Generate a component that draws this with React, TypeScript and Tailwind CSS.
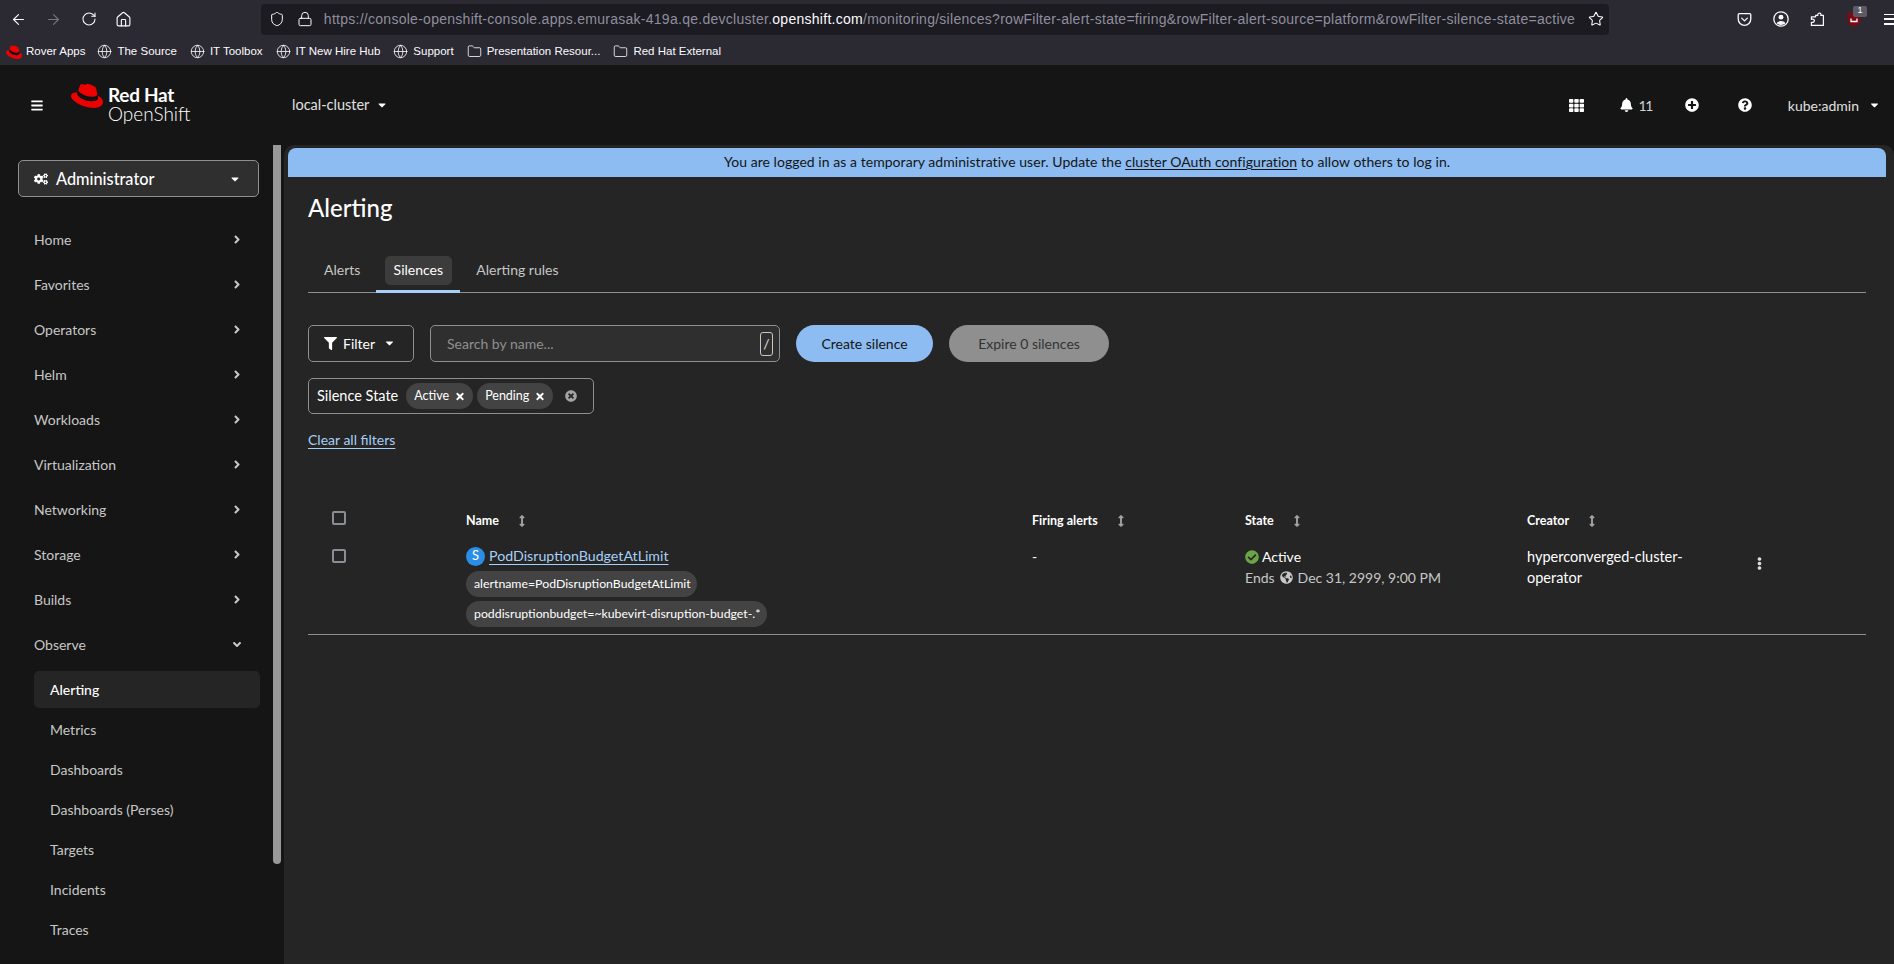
import { ArrowLeft, ArrowRight, RotateCw, House, Shield, Lock, Star, Globe, Folder } from "lucide-react";
import {
  FaAngleDown,
  FaAngleRight,
  FaArrowsAltV,
  FaBars,
  FaBell,
  FaCaretDown,
  FaCheckCircle,
  FaCogs,
  FaEllipsisV,
  FaFilter,
  FaGlobeAmericas,
  FaPlusCircle,
  FaQuestionCircle,
  FaTh,
  FaTimes,
  FaTimesCircle,
} from "react-icons/fa";

const NAV_ITEMS = ["Home", "Favorites", "Operators", "Helm", "Workloads", "Virtualization", "Networking", "Storage", "Builds"];
const OBSERVE_ITEMS = ["Metrics", "Dashboards", "Dashboards (Perses)", "Targets", "Incidents", "Traces"];

const BOOKMARKS = [
  { label: "The Source", icon: "globe" },
  { label: "IT Toolbox", icon: "globe" },
  { label: "IT New Hire Hub", icon: "globe" },
  { label: "Support", icon: "globe" },
  { label: "Presentation Resour...", icon: "folder" },
  { label: "Red Hat External", icon: "folder" },
];

function RedHatLogo({ className }: { className?: string }) {
  return (
    <svg viewBox="0 2.4 24 18.7" preserveAspectRatio="none" className={className}>
      <path
        d="M16.009 13.386c1.577 0 3.86-.326 3.86-2.202a1.765 1.765 0 0 0-.04-.431l-.94-4.08c-.216-.898-.406-1.305-1.982-2.093-1.223-.625-3.888-1.658-4.676-1.658-.733 0-.947.946-1.822.946-.842 0-1.467-.706-2.255-.706-.757 0-1.25.515-1.63 1.576 0 0-1.06 2.99-1.197 3.424a.81.81 0 0 0-.028.245c0 1.162 4.577 4.974 10.71 4.974"
        fill="#e00"
      />
      <path
        d="M20.11 11.951c.218 1.032.218 1.14.218 1.277 0 1.765-1.984 2.745-4.593 2.745-5.895.004-11.06-3.451-11.06-5.734a2.326 2.326 0 0 1 .19-.925C2.746 9.415 0 9.794 0 12.217c0 3.969 9.405 8.861 16.851 8.861 5.71 0 7.149-2.582 7.149-4.62 0-1.605-1.387-3.425-3.887-4.512"
        fill="#e00"
      />
      <path
        d="M20.11 11.951c.218 1.032.218 1.14.218 1.277 0 1.765-1.984 2.745-4.593 2.745-5.895.004-11.06-3.451-11.06-5.734a2.326 2.326 0 0 1 .19-.925l.68-1.7a.81.81 0 0 0-.028.245c0 1.162 4.577 4.974 10.482 4.827 1.577 0 3.86-.326 3.86-2.202 0-.15-.01-.29-.04-.431z"
        fill="#111"
      />
    </svg>
  );
}

function PocketIcon() {
  return (
    <svg viewBox="0 0 16 16" className="h-[15px] w-[15px]" fill="none" stroke="currentColor" strokeWidth="1.4">
      <path d="M2.500 1.800h11c.7 0 1.200.5 1.200 1.200v4.500a6.700 6.700 0 0 1-13.400 0V3c0-.7.5-1.200 1.200-1.200z" />
      <path d="M5 6.500l3 3 3-3" strokeLinecap="round" strokeLinejoin="round" />
    </svg>
  );
}

function AccountIcon() {
  return (
    <svg viewBox="0 0 16 16" className="h-[16px] w-[16px]" fill="none" stroke="currentColor" strokeWidth="1.3">
      <circle cx="8" cy="8" r="7.200" />
      <circle cx="8" cy="6.200" r="2.400" fill="currentColor" stroke="none" />
      <path d="M3.500 12.300c1-1.500 2.600-2.200 4.500-2.200s3.500.7 4.500 2.200c-1.200 1.100-2.800 1.700-4.500 1.700s-3.300-.6-4.500-1.700z" fill="currentColor" stroke="none" />
    </svg>
  );
}

function ExtensionIcon() {
  return (
    <svg viewBox="0 0 16 16" className="h-[16px] w-[15px]" fill="none" stroke="currentColor" strokeWidth="1.3" strokeLinejoin="round">
      <path d="M6 4.200h2.300c-.8-2.500 3.400-3.500 3.400-.9 0 .4-.1.700-.3.900h2.900v10.600H1.500v-3.300c1.500.5 3.200-.3 3.200-1.600 0-1.400-1.700-2-3.200-1.500V5.700H6z" />
    </svg>
  );
}

function UblockIcon() {
  return (
    <span className="relative block h-[15px] w-[14px]">
      <svg viewBox="0 0 14 15" className="h-[15px] w-[14px]">
        <path d="M7 0l6.500 1.500v6.200c0 3.400-3 5.900-6.500 7.300C3.500 13.600.5 11.100.5 7.700V1.500z" fill="#7c0a14" />
        <path d="M4 6.500v3h6v-3" fill="none" stroke="#ffffff" strokeWidth="1.300" />
      </svg>
      <span className="absolute -top-[6px] left-[6px] flex h-[11px] w-[14px] items-center justify-center rounded-[2px] bg-[#5b5b66] text-[9px] text-white">1</span>
    </span>
  );
}

function SortIcon() {
  return <FaArrowsAltV className="h-[12px] w-[12px] text-[#a3a3a3]" />;
}

function Label({ children, width }: { children: string; width: string }) {
  return (
    <div className={`flex h-[26px] items-center rounded-full bg-[#434343] pl-[8px] text-[12.3px] text-white ${width}`}>{children}</div>
  );
}

function FilterChip({ label }: { label: string }) {
  return (
    <span className="flex h-[26px] items-center gap-[6px] rounded-full bg-[#434343] pl-[8px] pr-[8px] text-[12.5px] text-white">
      {label}
      <FaTimes className="h-[11px] w-[10px]" />
    </span>
  );
}

function Checkbox() {
  return <span className="block h-[14px] w-[14px] rounded-[2px] border-2 border-[#8a8d94]" />;
}

function BrowserChrome() {
  return (
    <div className="h-[65px] bg-[#2b2a33] font-['Liberation_Sans',sans-serif] text-[#fbfbfe]">
      <div className="flex h-[38px] items-center">
        <div className="flex w-[261px] items-center pl-[10px]">
          <ArrowLeft className="h-[17px] w-[17px]" strokeWidth={1.6} />
          <ArrowRight className="ml-[18px] h-[17px] w-[17px] text-[#77767d]" strokeWidth={1.6} />
          <RotateCw className="ml-[19px] h-[16px] w-[16px]" strokeWidth={1.6} />
          <House className="ml-[18px] h-[17px] w-[17px]" strokeWidth={1.6} />
        </div>
        <div className="flex h-[31px] w-[1349px] items-center rounded-[4px] bg-[#1c1b22] pl-[8px]">
          <Shield className="h-[16px] w-[16px]" strokeWidth={1.5} />
          <Lock className="ml-[12px] h-[16px] w-[16px]" strokeWidth={1.5} />
          <div className="ml-[11px] w-[1255px] whitespace-nowrap text-[14px] tracking-[0.27px] text-[#8f8f9d]">
            https://console-openshift-console.apps.emurasak-419a.qe.devcluster.<span className="text-[#fbfbfe]">openshift.com</span>
            /monitoring/silences?rowFilter-alert-state=firing&amp;rowFilter-alert-source=platform&amp;rowFilter-silence-state=active
          </div>
          <Star className="ml-[9px] h-[16px] w-[16px]" strokeWidth={1.6} />
        </div>
        <div className="flex flex-1 items-center pl-[128px]">
          <PocketIcon />
          <span className="ml-[21px]">
            <AccountIcon />
          </span>
          <span className="ml-[21px]">
            <ExtensionIcon />
          </span>
          <span className="ml-[22px]">
            <UblockIcon />
          </span>
          <span className="ml-[23px] flex h-[11px] w-[10px] shrink-0 flex-col justify-between">
            <span className="block h-[1.5px] bg-[#fbfbfe]" />
            <span className="block h-[1.5px] bg-[#fbfbfe]" />
            <span className="block h-[1.5px] bg-[#fbfbfe]" />
          </span>
        </div>
      </div>
      <div className="flex h-[27px] items-center pl-[6px] text-[11.5px]">
        <RedHatLogo className="h-[14px] w-[16px]" />
        <span className="ml-[4px] mr-[12px]">Rover Apps</span>
        {BOOKMARKS.map((bookmark) => (
          <span key={bookmark.label} className="mr-[13px] flex items-center gap-[5px]">
            {bookmark.icon === "globe" ? (
              <Globe className="h-[15px] w-[15px]" strokeWidth={1.3} />
            ) : (
              <Folder className="h-[15px] w-[15px]" strokeWidth={1.3} />
            )}
            {bookmark.label}
          </span>
        ))}
      </div>
    </div>
  );
}

function Masthead() {
  return (
    <header className="flex h-[80px] items-center bg-[#151515] text-white">
      <FaBars className="ml-[31px] h-[13px] w-[12px]" />
      <RedHatLogo className="mb-[19px] ml-[28px] h-[25px] w-[32px]" />
      <div className="mb-[2px] ml-[5px] flex w-[184px] flex-col font-['Lato',sans-serif] text-[19px] leading-[19px]">
        <span className="font-bold tracking-[-0.3px]">Red Hat</span>
        <span className="font-light">OpenShift</span>
      </div>
      <span className="text-[14.5px] text-[#e0e0e0]">local-cluster</span>
      <FaCaretDown className="ml-[8px] h-[12px] w-[10px]" />
      <div className="ml-auto flex items-center pr-[15px] text-[14px]">
        <FaTh className="h-[15px] w-[15px]" />
        <FaBell className="ml-[36px] h-[14px] w-[13px]" />
        <span className="ml-[6px] tracking-[-1.5px] text-[#d2d2d2]">11</span>
        <FaPlusCircle className="ml-[33px] h-[14px] w-[14px]" />
        <FaQuestionCircle className="ml-[39px] h-[14px] w-[14px]" />
        <span className="ml-[36px] text-[#e0e0e0]">kube:admin</span>
        <FaCaretDown className="ml-[11px] h-[12px] w-[9px]" />
      </div>
    </header>
  );
}

function Sidebar() {
  return (
    <aside className="relative w-[284px] shrink-0 bg-[#151515] pl-[18px] pt-[15px] text-[14px] text-[#c7c7c7]">
      <div className="absolute right-[3px] top-0 h-[719px] w-[8px] rounded-b-full bg-[#999999]" />
      <div className="flex h-[37px] w-[241px] items-center rounded-[5px] border border-[#8f8f8f] bg-[#2f2f2f] pl-[15px] pr-[18px] pt-[1px] text-[16.3px] font-medium text-white">
        <FaCogs className="h-[14px] w-[14px]" />
        <span className="ml-[8px]">Administrator</span>
        <FaCaretDown className="ml-auto h-[12px] w-[10px]" />
      </div>
      <nav className="mt-[20px] pl-[16px]">
        {NAV_ITEMS.map((item) => (
          <div key={item} className="flex h-[45px] w-[209px] items-center justify-between pr-[1px]">
            <span>{item}</span>
            <FaAngleRight className="h-[13px] w-[10px]" />
          </div>
        ))}
        <div className="flex h-[45px] w-[209px] items-center justify-between">
          <span>Observe</span>
          <FaAngleDown className="h-[13px] w-[12px]" />
        </div>
        <div className="mt-[4px] flex h-[37px] w-[226px] items-center rounded-[5px] bg-[#252525] pl-[16px] font-medium text-white">Alerting</div>
        <div className="mt-[1px]">
          {OBSERVE_ITEMS.map((item) => (
            <div key={item} className="flex h-[40px] items-center pl-[16px]">
              {item}
            </div>
          ))}
        </div>
      </nav>
    </aside>
  );
}

function Content() {
  return (
    <main className="min-w-0 flex-1 rounded-t-[10px] bg-[#252525] pt-[3px]">
      <div className="mr-[8px] ml-[4px] flex h-[29px] items-center justify-center rounded-t-[8px] bg-[#8cbcf2] pb-[2px] text-[14px] tracking-[0.05px] text-[#151515]">
        <span>
          You are logged in as a temporary administrative user. Update the <span className="underline underline-offset-2">cluster OAuth configuration</span> to allow others to log in.
        </span>
      </div>
      <div className="pl-[24px] pr-[28px]">
        <h1 className="mt-[15px] text-[24px] font-medium leading-[32px] text-white">Alerting</h1>

        <div className="mt-[28px] flex h-[41px] items-start border-b border-[#8f8f8f] text-[14px] text-[#c7c7c7]">
          <div className="flex h-[40px] items-center pb-[5px]">
            <span className="pl-[16px] pr-[16px]">Alerts</span>
          </div>
          <div className="relative flex h-[40px] w-[84px] items-center justify-center pb-[5px] text-white">
            <span className="absolute left-[9px] top-[4px] h-[29px] w-[67px] rounded-[5px] bg-[#3c3c3c]" />
            <span className="relative">Silences</span>
            <span className="absolute bottom-[-1px] left-0 h-[3px] w-full bg-[#a7d0f8]" />
          </div>
          <div className="flex h-[40px] items-center pb-[5px]">
            <span className="pl-[16px]">Alerting rules</span>
          </div>
        </div>

        <div className="mt-[32px] flex items-center text-[14px]">
          <div className="flex h-[37px] w-[106px] items-center rounded-[5px] border border-[#8f8f8f] pb-[1px] pl-[15px] text-white">
            <FaFilter className="h-[13px] w-[13px]" />
            <span className="ml-[6px]">Filter</span>
            <FaCaretDown className="ml-[10px] h-[12px] w-[9px]" />
          </div>
          <div className="ml-[16px] flex h-[37px] w-[350px] items-center justify-between rounded-[5px] border border-[#8f8f8f] bg-[#2f2f2f] pl-[16px] pr-[6px] text-[#8f8f8f]">
            <span className="-mt-[1px]">Search by name...</span>
            <span className="flex h-[24px] w-[13px] items-center justify-center rounded-[3px] border border-[#c7c7c7] text-[#e0e0e0]">/</span>
          </div>
          <button className="ml-[16px] h-[37px] w-[137px] rounded-full bg-[#8cbcf2] pb-[1px] text-[#151515]">Create silence</button>
          <button className="ml-[16px] h-[37px] w-[160px] rounded-full bg-[#8f8f8f] pb-[1px] text-[#333333]">Expire 0 silences</button>
        </div>

        <div className="mt-[16px] flex h-[36px] w-[286px] items-center rounded-[5px] border border-[#8f8f8f] pl-[8px] text-[14.5px] text-white">
          <span>Silence State</span>
          <div className="ml-[8px] flex gap-[4px]">
            <FilterChip label="Active" />
            <FilterChip label="Pending" />
          </div>
          <FaTimesCircle className="ml-[12px] h-[12px] w-[12px] text-[#a3a3a3]" />
        </div>

        <a className="mt-[16px] block w-fit text-[14px] leading-[20px] text-[#a7d0f8] underline underline-offset-3">Clear all filters</a>

        <div className="mt-[61px] grid grid-cols-[134px_566px_213px_282px_1fr] items-center pl-[24px] text-[12.5px] font-bold text-white">
          <div className="mb-[6px]">
            <Checkbox />
          </div>
          <span className="flex items-center gap-[17px]">
            Name <SortIcon />
          </span>
          <span className="flex items-center gap-[17px]">
            Firing alerts <SortIcon />
          </span>
          <span className="flex items-center gap-[17px]">
            State <SortIcon />
          </span>
          <span className="flex items-center gap-[17px]">
            Creator <SortIcon />
          </span>
        </div>

        <div className="mt-[15px] grid h-[89px] grid-cols-[134px_566px_213px_282px_1fr] border-b border-[#8f8f8f] pl-[24px] text-[14px] text-white">
          <div className="pt-[3px]">
            <Checkbox />
          </div>
          <div>
            <div className="flex h-[20px] items-center gap-[4px]">
              <span className="flex h-[19px] w-[19px] items-center justify-center rounded-full bg-[#2b8ee6] text-[13px] text-white">S</span>
              <a className="text-[14.2px] text-[#a7d0f8] underline underline-offset-3">PodDisruptionBudgetAtLimit</a>
            </div>
            <div className="mt-[5px] flex flex-col gap-[4px]">
              <Label width="w-[231px]">alertname=PodDisruptionBudgetAtLimit</Label>
              <Label width="w-[301px]">poddisruptionbudget=~kubevirt-disruption-budget-.*</Label>
            </div>
          </div>
          <div>-</div>
          <div className="leading-[21px]">
            <div className="flex items-center gap-[3px]">
              <FaCheckCircle className="h-[14px] w-[14px] text-[#6ba547]" />
              Active
            </div>
            <div className="flex items-center gap-[5px] text-[#c7c7c7]">
              Ends <FaGlobeAmericas className="h-[13px] w-[13px]" /> Dec 31, 2999, 9:00 PM
            </div>
          </div>
          <div className="flex items-start justify-between pr-[100px] text-[14.5px] leading-[21px]">
            <div className="w-[170px]">hyperconverged-cluster-operator</div>
            <FaEllipsisV className="mt-[11px] h-[13px] w-[13px] text-[#e0e0e0]" />
          </div>
        </div>
      </div>
    </main>
  );
}

export default function App() {
  return (
    <div className="flex h-[964px] w-[1894px] flex-col overflow-hidden bg-[#151515] font-['Lato',sans-serif]">
      <BrowserChrome />
      <Masthead />
      <div className="flex min-h-0 flex-1">
        <Sidebar />
        <Content />
      </div>
    </div>
  );
}
